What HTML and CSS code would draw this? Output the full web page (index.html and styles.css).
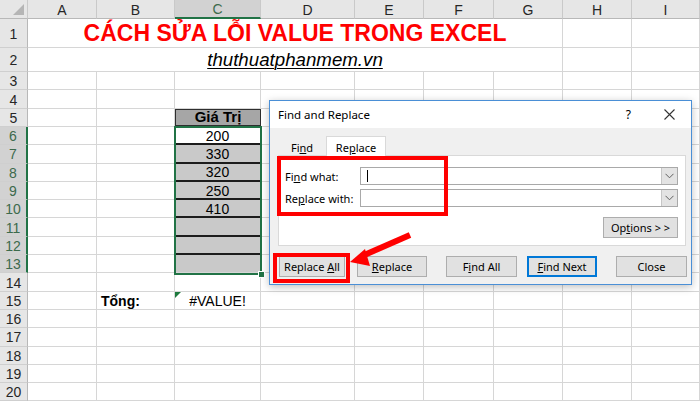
FILE: index.html
```html
<!DOCTYPE html>
<html lang="vi">
<head>
<meta charset="utf-8">
<title>Cách sửa lỗi VALUE trong Excel</title>
<link rel="stylesheet" href="styles.css">
</head>
<body>
<div class="sheet">
  <div class="hd corner"><span class="tri"></span></div>
  <div class="hd">A</div><div class="hd">B</div><div class="hd sel">C</div><div class="hd">D</div><div class="hd">E</div><div class="hd">F</div><div class="hd">G</div><div class="hd">H</div><div class="hd">I</div>

  <div class="rh">1</div><div class="c title">CÁCH SỬA LỖI VALUE TRONG EXCEL</div><div class="c"></div><div class="c"></div>
  <div class="rh">2</div><div class="c sub">thuthuatphanmem.vn</div><div class="c"></div><div class="c"></div>
  <div class="rh">3</div><div class="c"></div><div class="c"></div><div class="c"></div><div class="c"></div><div class="c"></div><div class="c"></div><div class="c"></div><div class="c"></div><div class="c"></div>
  <div class="rh">4</div><div class="c"></div><div class="c"></div><div class="c"></div><div class="c"></div><div class="c"></div><div class="c"></div><div class="c"></div><div class="c"></div><div class="c"></div>
  <div class="rh">5</div><div class="c"></div><div class="c"></div><div class="c gh"><span>Giá Trị</span></div><div class="c"></div><div class="c"></div><div class="c"></div><div class="c"></div><div class="c"></div><div class="c"></div>
  <div class="rh sel">6</div><div class="c"></div><div class="c"></div><div class="c v">200</div><div class="c"></div><div class="c"></div><div class="c"></div><div class="c"></div><div class="c"></div><div class="c"></div>
  <div class="rh sel">7</div><div class="c"></div><div class="c"></div><div class="c v g">330</div><div class="c"></div><div class="c"></div><div class="c"></div><div class="c"></div><div class="c"></div><div class="c"></div>
  <div class="rh sel">8</div><div class="c"></div><div class="c"></div><div class="c v g">320</div><div class="c"></div><div class="c"></div><div class="c"></div><div class="c"></div><div class="c"></div><div class="c"></div>
  <div class="rh sel">9</div><div class="c"></div><div class="c"></div><div class="c v g">250</div><div class="c"></div><div class="c"></div><div class="c"></div><div class="c"></div><div class="c"></div><div class="c"></div>
  <div class="rh sel">10</div><div class="c"></div><div class="c"></div><div class="c v g">410</div><div class="c"></div><div class="c"></div><div class="c"></div><div class="c"></div><div class="c"></div><div class="c"></div>
  <div class="rh sel">11</div><div class="c"></div><div class="c"></div><div class="c v g"></div><div class="c"></div><div class="c"></div><div class="c"></div><div class="c"></div><div class="c"></div><div class="c"></div>
  <div class="rh sel">12</div><div class="c"></div><div class="c"></div><div class="c v g"></div><div class="c"></div><div class="c"></div><div class="c"></div><div class="c"></div><div class="c"></div><div class="c"></div>
  <div class="rh sel">13</div><div class="c"></div><div class="c"></div><div class="c v g last"></div><div class="c"></div><div class="c"></div><div class="c"></div><div class="c"></div><div class="c"></div><div class="c"></div>
  <div class="rh">14</div><div class="c"></div><div class="c"></div><div class="c"></div><div class="c"></div><div class="c"></div><div class="c"></div><div class="c"></div><div class="c"></div><div class="c"></div>
  <div class="rh">15</div><div class="c"></div><div class="c b">Tổng:</div><div class="c err">#VALUE!</div><div class="c"></div><div class="c"></div><div class="c"></div><div class="c"></div><div class="c"></div><div class="c"></div>
  <div class="rh">16</div><div class="c"></div><div class="c"></div><div class="c"></div><div class="c"></div><div class="c"></div><div class="c"></div><div class="c"></div><div class="c"></div><div class="c"></div>
  <div class="rh">17</div><div class="c"></div><div class="c"></div><div class="c"></div><div class="c"></div><div class="c"></div><div class="c"></div><div class="c"></div><div class="c"></div><div class="c"></div>
  <div class="rh">18</div><div class="c"></div><div class="c"></div><div class="c"></div><div class="c"></div><div class="c"></div><div class="c"></div><div class="c"></div><div class="c"></div><div class="c"></div>
  <div class="rh">19</div><div class="c"></div><div class="c"></div><div class="c"></div><div class="c"></div><div class="c"></div><div class="c"></div><div class="c"></div><div class="c"></div><div class="c"></div>
  <div class="rh">20</div><div class="c"></div><div class="c"></div><div class="c"></div><div class="c"></div><div class="c"></div><div class="c"></div><div class="c"></div><div class="c"></div><div class="c"></div>
</div>

<div class="selection"><span class="handle"></span></div>

<div class="dlg">
  <div class="dlg-title">
    <span class="dlg-name">Find and Replace</span>
    <span class="help">?</span>
    <svg class="xbtn" width="11" height="11" viewBox="0 0 11 11"><path d="M0.5 0.5 L10.5 10.5 M10.5 0.5 L0.5 10.5" stroke="#333" stroke-width="1.1" fill="none"/></svg>
  </div>
  <div class="dlg-body">
    <div class="tabs">
      <div class="tab"><span>Fi<u>n</u>d</span></div>
      <div class="tab on"><span>Re<u>p</u>lace</span></div>
    </div>
    <div class="panel">
      <div class="frow">
        <span class="lbl">Fi<u>n</u>d what:</span>
        <div class="combo"><span class="field"><span class="caret"></span></span><span class="dd"><svg width="9" height="6" viewBox="0 0 9 6"><path d="M0.5 0.8 L4.5 4.8 L8.5 0.8" stroke="#606060" stroke-width="1" fill="none"/></svg></span></div>
      </div>
      <div class="frow">
        <span class="lbl">Re<u>p</u>lace with:</span>
        <div class="combo"><span class="field"></span><span class="dd"><svg width="9" height="6" viewBox="0 0 9 6"><path d="M0.5 0.8 L4.5 4.8 L8.5 0.8" stroke="#606060" stroke-width="1" fill="none"/></svg></span></div>
      </div>
      <div class="optrow"><span class="btn opt"><span>Op<u>t</u>ions &gt; &gt;</span></span></div>
    </div>
    <div class="btns">
      <span class="btn w66"><span>Replace <u>A</u>ll</span></span>
      <span class="btn w70 g12"><span><u>R</u>eplace</span></span>
      <span class="btn w71 g19"><span>F<u>i</u>nd All</span></span>
      <span class="btn w70 g10 def"><span><u>F</u>ind Next</span></span>
      <span class="btn w71 g19"><span>Close</span></span>
    </div>
  </div>
</div>

<div class="mark mark-fields"></div>
<div class="mark mark-all"></div>
<svg class="arrow" width="70" height="42" viewBox="0 0 70 42">
  <path d="M62 5 L14 26" stroke="#ff0000" stroke-width="6" fill="none" stroke-linecap="butt"/>
  <path d="M2 32 L17 19 L22 36 Z" fill="#ff0000"/>
</svg>
</body>
</html>
```

FILE: styles.css
```css
* { box-sizing: border-box; }
body {
  margin: 0;
  width: 700px;
  height: 402px;
  overflow: hidden;
  position: relative;
  background: #fff;
  font-family: "Liberation Sans", Arial, sans-serif;
}

/* ---------- sheet ---------- */
.sheet {
  display: grid;
  grid-template-columns: 28px 69px 78px 86px 94px 69px 70px 69px 69px 68px;
  grid-template-rows: 19px 29px 24px 18px 19px 18px repeat(15, 18.3px);
}
.hd {
  background: #e6e6e6;
  border-right: 1px solid #c9c9c9;
  border-bottom: 1px solid #b8b8b8;
  display: flex;
  align-items: center;
  justify-content: center;
  font-size: 14px;
  color: #262626;
  padding-top: 1px;
}
.hd.sel {
  background: #d2d2d2;
  color: #3c6a4c;
  border-bottom: 2px solid #217346;
}
.corner { position: relative; }
.corner .tri {
  position: absolute;
  right: 3px;
  bottom: 3px;
  width: 0;
  height: 0;
  border-left: 11px solid transparent;
  border-bottom: 11px solid #b5b5b5;
}
.rh {
  background: #e6e6e6;
  border-right: 1px solid #b8b8b8;
  border-bottom: 1px solid #cfcfcf;
  display: flex;
  align-items: center;
  justify-content: center;
  font-size: 14px;
  color: #262626;
  padding-top: 1px;
}
.rh.sel {
  background: #d2d2d2;
  color: #3c6a4c;
  border-right: 2px solid #217346;
}
.c {
  border-right: 1px solid #d6d6d6;
  border-bottom: 1px solid #d6d6d6;
  display: flex;
  align-items: center;
  font-size: 14px;
  color: #000;
  position: relative;
  white-space: nowrap;
}
.title {
  grid-column: span 7;
  justify-content: center;
  color: #ff0000;
  font-weight: bold;
  font-size: 23px;
  padding-top: 1px;
}
.sub {
  grid-column: span 7;
  justify-content: center;
  font-style: italic;
  text-decoration: underline;
  text-underline-offset: 2px;
  text-decoration-thickness: 1px;
  font-size: 18.7px;
  padding-top: 1px;
}
.gh {
  background: #a6a6a6;
  font-weight: bold;
  font-size: 15px;
  justify-content: center;
  align-items: flex-start;
  border: 1px solid #2e2e2e;
  border-bottom: 2px solid #2e2e2e;
}
.gh span {
  line-height: 14px;
  margin-top: 0;
}
.v {
  justify-content: center;
  border-bottom: 2px solid #1c1c1c;
  padding-top: 1px;
}
.v.g { background: #c9c9c9; }
.v.last { border-bottom: 1px solid #d6d6d6; }
.b {
  font-weight: bold;
  padding-left: 4px;
  padding-top: 2px;
}
.err {
  justify-content: center;
  padding-left: 0;
  padding-top: 2px;
}
.err::before {
  content: "";
  position: absolute;
  left: 0;
  top: 0;
  border-top: 6px solid #1e7a3e;
  border-right: 6px solid transparent;
}

/* selection overlay */
.selection {
  position: absolute;
  left: 174px;
  top: 126px;
  width: 88px;
  height: 149px;
  border: 2px solid #217346;
}
.handle {
  position: absolute;
  right: -5px;
  bottom: -5px;
  width: 7px;
  height: 7px;
  background: #217346;
  border: 1px solid #fff;
}

/* ---------- dialog ---------- */
.dlg {
  position: absolute;
  left: 269px;
  top: 100px;
  width: 423px;
  height: 185px;
  border: 1px solid #4a8fd6;
  background: #f0f0f0;
  font-family: "Noto Sans", "Open Sans", sans-serif;
  font-size: 11px;
  color: #000;
  box-shadow: 0 2px 8px rgba(0,0,0,0.25);
  display: flex;
  flex-direction: column;
}
.dlg u { text-decoration: underline; text-underline-offset: 1px; }
.dlg-title {
  height: 27px;
  background: #fff;
  display: flex;
  align-items: center;
  padding-left: 8px;
  flex: none;
}
.dlg-name { font-size: 11.5px; flex: 1; }
.help { font-size: 12px; margin-right: 33px; }
.xbtn { margin-right: 16px; }
.dlg-body {
  flex: 1;
  padding: 8px 5px 0 8px;
  display: flex;
  flex-direction: column;
}
.tabs {
  display: flex;
  height: 19px;
  align-items: flex-end;
}
.tab {
  height: 17px;
  width: 48px;
  display: flex;
  align-items: center;
  justify-content: center;
  padding-top: 1px;
}
.tab.on {
  height: 20px;
  width: 60px;
  background: #fff;
  border: 1px solid #d9d9d9;
  border-bottom: none;
  margin-bottom: -1px;
  position: relative;
  z-index: 1;
}
.panel {
  height: 91px;
  background: #fff;
  border: 1px solid #d9d9d9;
  padding: 11px 7px 0 6px;
  display: flex;
  flex-direction: column;
}
.frow {
  display: flex;
  align-items: center;
  height: 18px;
  margin-bottom: 4px;
}
.lbl { width: 75px; flex: none; }
.combo {
  flex: 1;
  height: 18px;
  display: flex;
  border: 1px solid #a9a9a9;
  background: #fff;
}
.field {
  flex: 1;
  display: flex;
  align-items: center;
  padding-left: 6px;
}
.caret {
  width: 1px;
  height: 12px;
  background: #000;
}
.dd {
  width: 16px;
  background: #e3e3e3;
  border-left: 1px solid #c6c6c6;
  display: flex;
  align-items: center;
  justify-content: center;
}
.optrow {
  display: flex;
  justify-content: flex-end;
  margin-top: 6px;
}
.btn {
  height: 21px;
  background: #e1e1e1;
  border: 1px solid #adadad;
  display: flex;
  align-items: center;
  justify-content: center;
  flex: none;
  white-space: pre;
}
.opt { width: 75px; }
.btns {
  display: flex;
  margin-top: 10px;
  padding-left: 1px;
}
.w66 { width: 66px; }
.w70 { width: 70px; }
.w71 { width: 71px; }
.g10 { margin-left: 10px; }
.g12 { margin-left: 12px; }
.g19 { margin-left: 19px; }
.def {
  border: 1px solid #0078d7;
  box-shadow: inset 0 0 0 1px #0078d7;
}

/* ---------- annotations ---------- */
.mark {
  position: absolute;
  border: 4px solid #ff0000;
}
.mark-fields { left: 277px; top: 156px; width: 171px; height: 60px; }
.mark-all { left: 273px; top: 253px; width: 77px; height: 30px; }
.arrow {
  position: absolute;
  left: 348px;
  top: 230px;
}
```
